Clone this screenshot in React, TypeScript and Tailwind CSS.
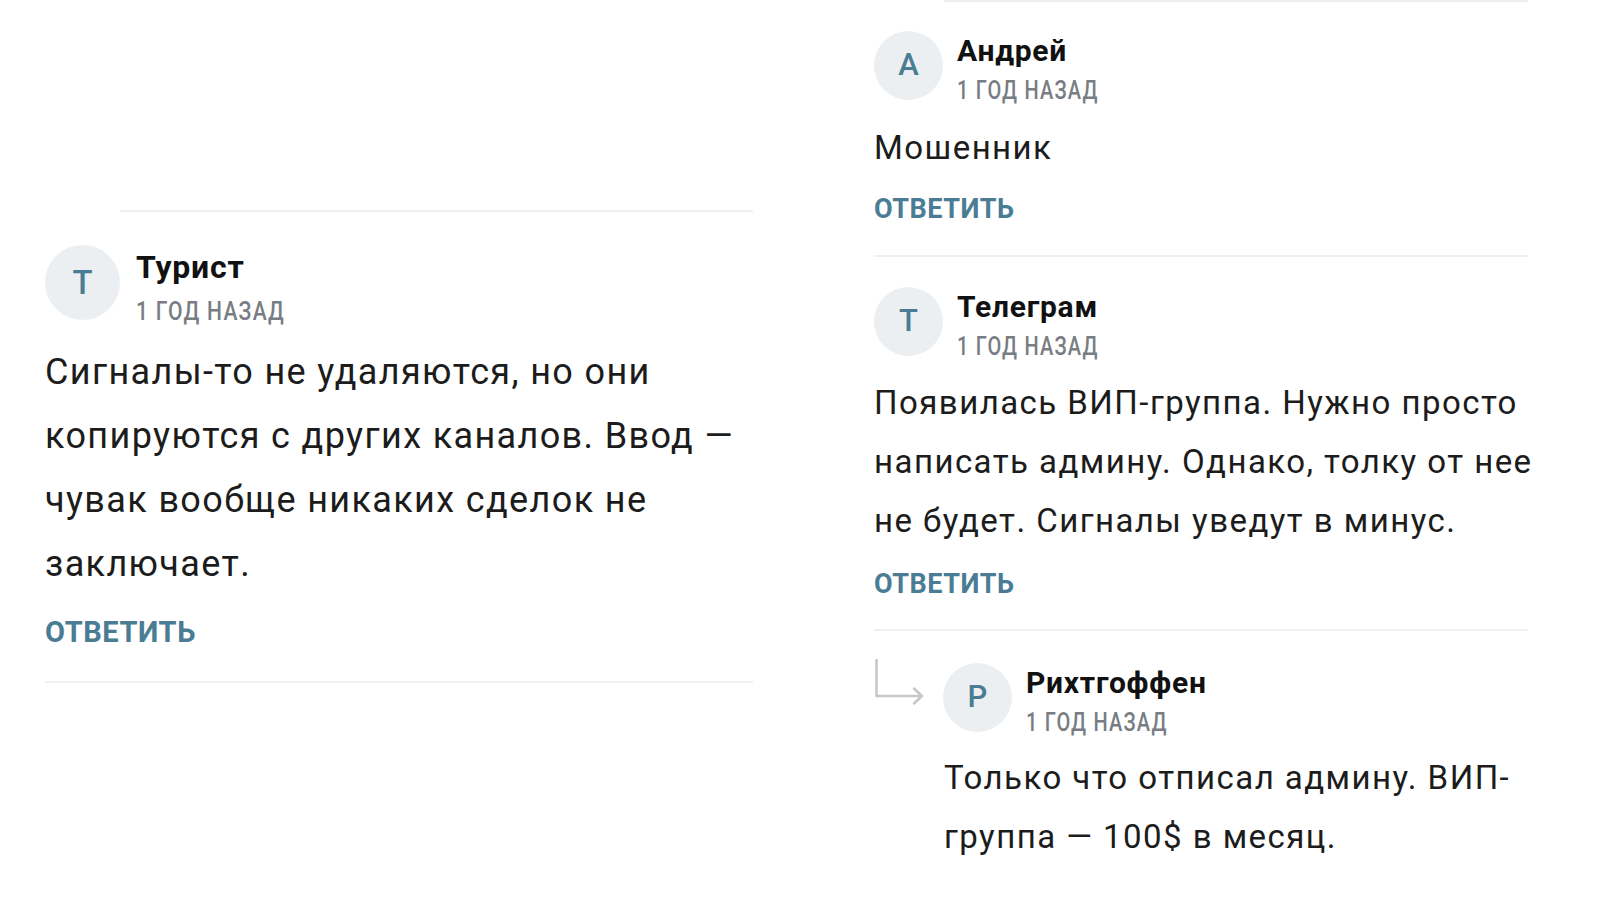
import type { FC, ReactNode } from "react";

const font = { fontFamily: "Roboto, 'Noto Sans', sans-serif" };

const Line: FC<{ items: string[] }> = ({ items }) => (
	<>
		{items.map((t, i) => (
			<span key={i} className="block whitespace-nowrap">
				{t}
			</span>
		))}
	</>
);

// левая колонка — крупнее
const BigHeader: FC<{ letter: string; name: string }> = ({ letter, name }) => (
	<div className="flex items-start">
		<div className="w-[75px] h-[75px] rounded-full bg-[#eceff1] flex items-center justify-center text-[#4a7c94] text-[33px] font-medium shrink-0">
			{letter}
		</div>
		<div className="ml-[16px] pt-[5px] flex flex-col">
			<span className="text-[32px] leading-[34px] font-bold tracking-[0.025em] text-[#111]">{name}</span>
			<span className="mt-[15px] text-[26px] leading-[24px] font-medium tracking-[0.06em] text-[#787d83] whitespace-nowrap origin-left scale-x-[0.81]">
				1 ГОД НАЗАД
			</span>
		</div>
	</div>
);

const SmallHeader: FC<{ letter: string; name: string }> = ({ letter, name }) => (
	<div className="flex items-start">
		<div className="w-[69px] h-[69px] rounded-full bg-[#eceff1] flex items-center justify-center text-[#4a7c94] text-[31px] font-medium shrink-0">
			{letter}
		</div>
		<div className="ml-[14px] pt-[5px] flex flex-col">
			<span className="text-[30px] leading-[30px] font-bold tracking-[0.025em] text-[#111]">{name}</span>
			<span className="mt-[14px] text-[25px] leading-[22px] font-medium tracking-[0.06em] text-[#787d83] whitespace-nowrap origin-left scale-x-[0.8]">
				1 ГОД НАЗАД
			</span>
		</div>
	</div>
);

const Reply: FC<{ className: string; children?: ReactNode }> = ({ className, children }) => (
	<div className={className}>{children ?? "ОТВЕТИТЬ"}</div>
);

export default function App() {
	return (
		<div className="w-[1600px] h-[900px] bg-white flex overflow-hidden" style={font}>
			{/* левая колонка */}
			<div className="ml-[45px] w-[708px] pt-[210px]">
				<div className="ml-[75px] h-[2px] bg-[#efefef]" />
				<div className="mt-[33px]">
					<BigHeader letter="Т" name="Турист" />
				</div>
				<div className="mt-[17px] text-[36px] leading-[64px] tracking-[0.038em] text-[#1c1c1c]">
					<Line
						items={[
							"Сигналы-то не удаляются, но они",
							"копируются с других каналов. Ввод —",
							"чувак вообще никаких сделок не",
							"заключает.",
						]}
					/>
				</div>
				<Reply className="mt-[21px] text-[29px] leading-[30px] font-bold tracking-[0.02em] text-[#4a7c94]" />
				<div className="mt-[34px] h-[2px] bg-[#efefef]" />
			</div>

			{/* правая колонка */}
			<div className="ml-[121px] w-[654px]">
				<div className="ml-[70px] h-[2px] bg-[#efefef]" />
				<div className="mt-[29px]">
					<SmallHeader letter="А" name="Андрей" />
				</div>
				<div className="mt-[16px] text-[33px] leading-[59px] tracking-[0.044em] text-[#1c1c1c]">Мошенник</div>
				<Reply className="mt-[18px] text-[27px] leading-[28px] font-bold tracking-[0.02em] text-[#4a7c94]" />
				<div className="mt-[32px] h-[2px] bg-[#efefef]" />

				<div className="mt-[30px]">
					<SmallHeader letter="Т" name="Телеграм" />
				</div>
				<div className="mt-[15px] text-[33px] leading-[59px] tracking-[0.044em] text-[#1c1c1c]">
					<Line
						items={[
							"Появилась ВИП-группа. Нужно просто",
							"написать админу. Однако, толку от нее",
							"не будет. Сигналы уведут в минус.",
						]}
					/>
				</div>
				<Reply className="mt-[20px] text-[27px] leading-[28px] font-bold tracking-[0.02em] text-[#4a7c94]" />
				<div className="mt-[31px] h-[2px] bg-[#efefef]" />

				{/* ответ */}
				<div className="mt-[32px] flex items-start">
					<svg width="52" height="46" viewBox="0 0 52 46" className="shrink-0 mt-[-4px]" fill="none">
						<path
							d="M2.5 0 V37 H48 M40 29.5 L48 37 L40 44.5"
							stroke="#c5c8cb"
							strokeWidth="2.5"
							strokeLinecap="round"
							strokeLinejoin="round"
						/>
					</svg>
					<div className="ml-[17px]">
						<SmallHeader letter="Р" name="Рихтгоффен" />
					</div>
				</div>
				<div className="ml-[70px] mt-[14px] text-[33px] leading-[59px] tracking-[0.044em] text-[#1c1c1c]">
					<Line items={["Только что отписал админу. ВИП-", "группа — 100$ в месяц."]} />
				</div>
			</div>
		</div>
	);
}
